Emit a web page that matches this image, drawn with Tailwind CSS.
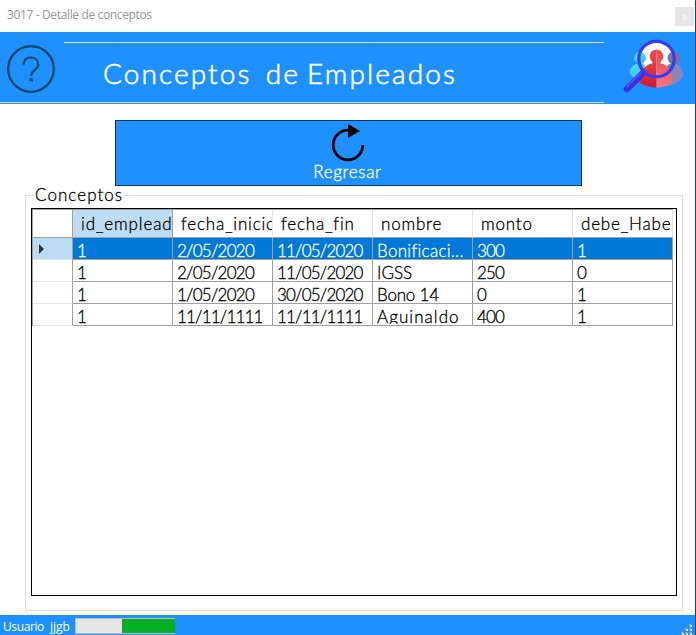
<!DOCTYPE html>
<html lang="es">
<head>
<meta charset="utf-8">
<title>3017 - Detalle de conceptos</title>
<script src="https://cdn.jsdelivr.net/npm/@tailwindcss/browser@4"></script>
</head>
<body class="w-[696px] h-[635px] overflow-hidden bg-white font-['Lato',sans-serif] text-black">
<div class="flex flex-col w-[696px] h-[635px] border-r border-[#0b4a70]">
  <div class="h-8 shrink-0 flex justify-between pl-[7px] pr-[1px]">
    <span class="pt-[7px] text-[12px] leading-[16px] text-[#999] font-['Open_Sans',sans-serif] tracking-[-0.36px] whitespace-nowrap">3017 - Detalle de conceptos</span>
    <span class="mt-[7px] w-[19px] h-[19px] bg-[#e5e5e5] flex items-center justify-center">
      <svg class="w-[5px] h-[6px]" viewBox="0 0 5 6"><path d="M.5.5l4 5M4.5.5l-4 5" stroke="#f8f8f8" stroke-width="1.5"/></svg>
    </span>
  </div>
  <header class="h-[72px] shrink-0 bg-[#1e90ff] flex">
    <div class="w-[604px] h-[71px] border-b border-[#dce4e8] flex">
      <div class="w-16 shrink-0 pl-[7px] pt-[13px]">
        <svg class="w-12 h-12" viewBox="0 0 48 48" fill="none" stroke="#114766"><circle cx="24" cy="24" r="22.8" stroke-width="2.3"/><path d="M16.7 19.5C16.7 15 19.7 12.6 24 12.6s7.3 2.8 7.3 6.8c0 5.6-7.2 5.4-7.2 11.5" stroke-width="2"/><path d="M22.4 34.8h3.4" stroke-width="3"/></svg>
      </div>
      <div class="grow h-[61px] mt-[10px] border-t border-[#dce4e8] pl-[39px] pt-[13px]">
        <h1 class="text-[28px] leading-[34px] font-light [-webkit-text-stroke:0.6px_white] text-white whitespace-pre tracking-[2.1px] [word-spacing:-2.600px]">Conceptos  de Empleados</h1>
      </div>
    </div>
    <svg class="w-[62px] h-[58px] ml-[19px] mt-[6px]" viewBox="0 0 62 58">
      <defs>
        <linearGradient id="cyan" x2="0" y2="1"><stop stop-color="#3ce0e4"/><stop offset="1" stop-color="#45c1f5"/></linearGradient>
        <linearGradient id="red" x2="0" y2="1"><stop stop-color="#f04c4c"/><stop offset="1" stop-color="#c91c3a"/></linearGradient>
        <linearGradient id="rose" x2="0" y2="1"><stop stop-color="#ef4347"/><stop offset="1" stop-color="#f77785"/></linearGradient>
      </defs>
      <path d="M7 32c2-5 6-7 13-7v11l-9 4C8 38 6 35 7 32z" fill="url(#cyan)"/>
      <path d="M60 34c-1-6-8-10-17-9v23c9 0 18-7 17-14z" fill="#8686b8"/>
      <circle cx="33.500" cy="21" r="18" fill="#fff"/>
      <circle cx="17" cy="20" r="6" fill="url(#cyan)"/><path d="M17 25c4 0 6 3 6 8l-5-1z" fill="#46cfee"/>
      <circle cx="51" cy="20" r="6.500" fill="#7676a6"/><path d="M50 25c-3 0-6 2-7 5l5 3z" fill="#7676a6"/>
      <path d="M33.500 11.500a7 7 0 0 0-4 12.500v1.500C22 26 17 34 16 44c5 4 11 5.500 17.500 5.500z" fill="url(#red)"/>
      <path d="M33.500 11.500a7 7 0 0 1 4 12.500v1.500c8 .5 12 8.500 12 18.500-5 4-10 5.500-16 5.500z" fill="url(#rose)"/>
      <path d="M4 51 19 36" stroke="#3530e8" stroke-width="6.500" stroke-linecap="round"/>
      <path d="M3.500 49 18 34.500" stroke="#5951f5" stroke-width="2"/>
      <circle cx="33.500" cy="21" r="17.700" fill="none" stroke="#3d3aee" stroke-width="3.200"/>
    </svg>
  </header>
  <main class="h-[511px] shrink-0 flex flex-col pt-4 pl-[25px] pr-[12px]">
    <button class="ml-[90px] w-[467px] h-[66px] shrink-0 bg-[#1e90ff] border border-[#003566] flex flex-col items-center">
      <svg class="w-9 h-[38px] mt-[3px] mr-[2px]" viewBox="0 0 36 38"><path d="M18 6.200A14.800 14.800 0 1 0 32.800 21" fill="none" stroke="#000" stroke-width="2.800"/><path d="M18 0v14l12-7z"/></svg>
      <span class="text-[17px] leading-[20px] font-light [-webkit-text-stroke:0.3px_white] text-white mr-[2px] tracking-[0.65px]">Regresar</span>
    </button>
    <fieldset class="h-[425px] w-[658px] border border-[#dcdcdc] pl-[5px] shrink-0">
      <legend class="ml-[3px] px-px h-[18px] text-[17px] leading-[18px] font-light [-webkit-text-stroke:0.3px_black] whitespace-nowrap tracking-[1.05px]">Conceptos</legend>
      <div class="w-[646px] h-[388px] mt-[4px] border border-black overflow-hidden">
        <div class="grid grid-cols-[40px_repeat(6,100px)] grid-rows-[28px_repeat(4,22px)] w-[641px] border-l border-t border-[#a0a0a0] text-[17px] leading-[19px] font-light [-webkit-text-stroke:0.3px_currentColor] whitespace-nowrap [&>*]:border-r [&>*]:border-b [&>*]:border-[#a0a0a0] [&>*]:overflow-hidden">
          <div></div>
          <div class="bg-[#bcdcf4] pl-[8px] pt-[4px] tracking-[0.85px]">id_empleado</div>
          <div class="border-r-[#e5e5e5]! pl-[8px] pt-[4px] tracking-[0.8px]">fecha_inicio</div>
          <div class="border-r-[#e5e5e5]! pl-[8px] pt-[4px] tracking-[0.8px]">fecha_fin</div>
          <div class="border-r-[#e5e5e5]! pl-[8px] pt-[4px] tracking-[0.8px]">nombre</div>
          <div class="border-r-[#e5e5e5]! pl-[8px] pt-[4px] tracking-[0.8px]">monto</div>
          <div class="border-r-[#e5e5e5]! pl-[8px] pt-[4px] tracking-[0.8px]">debe_Haber</div>

          <div class="bg-[#bcdcf4] border-b-[#e5e5e5]! pl-[6px] pt-[6px]"><svg class="w-[5px] h-[10px]" viewBox="0 0 5 10"><path d="M0 0v10l5-5z" fill="#333"/></svg></div>
          <div class="bg-[#0078d7] text-white pl-[4px] pt-[3px]">1</div>
          <div class="bg-[#0078d7] text-white pl-[4px] pt-[3px] tracking-[-0.75px]">2/05/2020</div>
          <div class="bg-[#0078d7] text-white pl-[4px] pt-[3px] tracking-[-0.8px]">11/05/2020</div>
          <div class="bg-[#0078d7] text-white pl-[4px] pt-[3px] tracking-[0.3px]">Bonificaci...</div>
          <div class="bg-[#0078d7] text-white pl-[4px] pt-[3px] tracking-[-0.9px]">300</div>
          <div class="bg-[#0078d7] text-white pl-[4px] pt-[3px]">1</div>

          <div class="border-b-[#e5e5e5]!"></div>
          <div class="pl-[4px] pt-[3px]">1</div>
          <div class="pl-[4px] pt-[3px] tracking-[-0.75px]">2/05/2020</div>
          <div class="pl-[4px] pt-[3px] tracking-[-0.8px]">11/05/2020</div>
          <div class="pl-[4px] pt-[3px]">IGSS</div>
          <div class="pl-[4px] pt-[3px] tracking-[-0.9px]">250</div>
          <div class="pl-[4px] pt-[3px]">0</div>

          <div class="border-b-[#e5e5e5]!"></div>
          <div class="pl-[4px] pt-[3px]">1</div>
          <div class="pl-[4px] pt-[3px] tracking-[-0.75px]">1/05/2020</div>
          <div class="pl-[4px] pt-[3px] tracking-[-0.8px]">30/05/2020</div>
          <div class="pl-[4px] pt-[3px] tracking-[-0.2px]">Bono 14</div>
          <div class="pl-[4px] pt-[3px]">0</div>
          <div class="pl-[4px] pt-[3px]">1</div>

          <div class="border-b-[#e5e5e5]!"></div>
          <div class="pl-[4px] pt-[3px]">1</div>
          <div class="pl-[4px] pt-[3px] tracking-[-0.8px]">11/11/1111</div>
          <div class="pl-[4px] pt-[3px] tracking-[-0.8px]">11/11/1111</div>
          <div class="pl-[4px] pt-[3px] tracking-[1.05px]"><div class="h-[17px] overflow-hidden">Aguinaldo</div></div>
          <div class="pl-[4px] pt-[3px] tracking-[-0.9px]">400</div>
          <div class="pl-[4px] pt-[3px]">1</div>
        </div>
      </div>
    </fieldset>
  </main>
  <footer class="h-5 shrink-0 bg-[#1e90ff] flex text-white text-[12px] leading-[16px] font-['Open_Sans',sans-serif]">
    <span class="pl-[3px] pt-1 w-[50px] tracking-[-0.4px]">Usuario</span>
    <span class="pt-1 w-[25px]">jjgb</span>
    <div class="mt-[3px] w-[100px] h-4 border-y border-l border-[#bcbcbc] bg-[#e6e6e6] flex justify-end"><div class="w-[53px] bg-[#06b025]"></div></div>
    <svg class="ml-auto mr-[2px] mt-2 w-3 h-3" viewBox="0 0 12 12"><path d="M9 2h2v2H9zM5 6h2v2H5zM9 6h2v2H9zM1 10h2v2H1zM5 10h2v2H5zM9 10h2v2H9z" fill="#fff"/><path d="M8 1h2v2H8zM4 5h2v2H4zM8 5h2v2H8zM0 9h2v2H0zM4 9h2v2H4zM8 9h2v2H8z" fill="#a9a294"/></svg>
  </footer>
</div>
</body>
</html>
